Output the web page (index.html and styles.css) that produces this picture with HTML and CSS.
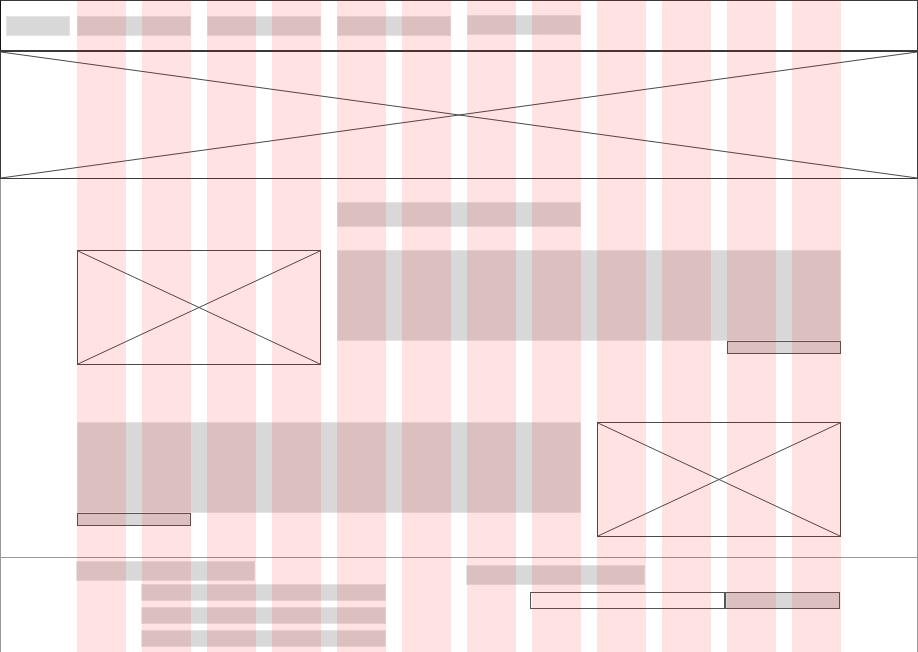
FILE: index.html
```html
<!DOCTYPE html>
<html lang="en">
<head>
    <meta charset="UTF-8">
    <meta name="viewport" content="width=device-width, initial-scale=1.0">
    <title>Wireframe</title>
    <link rel="stylesheet" href="styles.css">
</head>
<body>
    <header class="top">
        <div class="logo"></div>
        <nav class="nav">
            <div class="nav-item"></div>
            <div class="nav-item"></div>
            <div class="nav-item"></div>
            <div class="nav-item up"></div>
        </nav>
    </header>

    <div class="hero">
        <svg class="cross" viewBox="0 0 100 100" preserveAspectRatio="none">
            <line x1="0" y1="0" x2="100" y2="100" vector-effect="non-scaling-stroke"/>
            <line x1="100" y1="0" x2="0" y2="100" vector-effect="non-scaling-stroke"/>
        </svg>
    </div>

    <main class="content">
        <div class="grid">
            <div class="block title"></div>
        </div>

        <div class="grid row-one">
            <div class="pic pic-left">
                <svg class="cross" viewBox="0 0 100 100" preserveAspectRatio="none">
                    <line x1="0" y1="0" x2="100" y2="100" vector-effect="non-scaling-stroke"/>
                    <line x1="100" y1="0" x2="0" y2="100" vector-effect="non-scaling-stroke"/>
                </svg>
            </div>
            <div class="text-wrap wide-right">
                <div class="block text"></div>
                <div class="btn"></div>
            </div>
        </div>

        <div class="grid row-two">
            <div class="text-wrap wide-left">
                <div class="block text"></div>
                <div class="btn"></div>
            </div>
            <div class="pic pic-right">
                <svg class="cross" viewBox="0 0 100 100" preserveAspectRatio="none">
                    <line x1="0" y1="0" x2="100" y2="100" vector-effect="non-scaling-stroke"/>
                    <line x1="100" y1="0" x2="0" y2="100" vector-effect="non-scaling-stroke"/>
                </svg>
            </div>
        </div>
    </main>

    <footer class="foot">
        <div class="foot-inner">
            <div class="foot-col">
                <div class="block foot-title"></div>
                <ul class="links">
                    <li class="block"></li>
                    <li class="block"></li>
                    <li class="block"></li>
                </ul>
            </div>
            <div class="foot-col">
                <div class="block foot-title right"></div>
                <form class="signup">
                    <input type="text" class="field">
                    <button type="button" class="send"></button>
                </form>
            </div>
        </div>
    </footer>

    <!-- 12 column grid overlay -->
    <div class="overlay">
        <div class="overlay-grid">
            <span></span><span></span><span></span><span></span>
            <span></span><span></span><span></span><span></span>
            <span></span><span></span><span></span><span></span>
        </div>
    </div>
</body>
</html>
```

FILE: styles.css
```css
* {
    box-sizing: border-box;
}

body {
    margin: 0;
    padding: 0;
    width: 918px;
    height: 652px;
    overflow: hidden;
    background: #fff;
    font-family: "Liberation Sans", Arial, sans-serif;
}

.block {
    background-color: #d8d8d8;
    border: 1px solid #e4e4e4;
}

.cross {
    display: block;
    width: 100%;
    height: 100%;
}

.cross line {
    stroke: #4a4a4a;
    stroke-width: 1;
}

/* header */
.top {
    display: grid;
    grid-template-columns: 76px 764px 1fr;
    height: 50px;
    border-top: 1px solid #3a3a3a;
    border-left: 1px solid #111;
    border-right: 1px solid #3a3a3a;
}

.logo {
    margin: 15px 0 0 5px;
    width: 64px;
    height: 20px;
    background-color: #d8d8d8;
    border: 1px solid #e4e4e4;
}

.nav {
    display: grid;
    grid-template-columns: repeat(6, 114px);
    gap: 16px;
}

.nav-item {
    margin-top: 15px;
    height: 20px;
    background-color: #d8d8d8;
    border: 1px solid #e4e4e4;
}

.nav-item.up {
    margin-top: 14px;
}

.hero {
    height: 129px;
    border: 1px solid #3a3a3a;
    border-top-width: 2px;
}

/* main */
.content {
    height: 378px;
    border-left: 1px solid #999;
    border-right: 1px solid #999;
    padding-top: 23px;
}

.grid {
    display: grid;
    grid-template-columns: repeat(12, 49px);
    column-gap: 16px;
    width: 764px;
    margin: 0 auto;
}

.title {
    grid-column: 5 / 9;
    height: 25px;
}

.row-one {
    margin-top: 23px;
}

.row-two {
    margin-top: 57px;
}

.pic {
    border: 1px solid #4a4a4a;
    height: 115px;
}

.pic-left {
    grid-column: 1 / 5;
}

.pic-right {
    grid-column: 9 / 13;
}

.wide-right {
    grid-column: 5 / 13;
    display: flex;
    flex-direction: column;
    align-items: flex-end;
}

.wide-left {
    grid-column: 1 / 9;
    display: flex;
    flex-direction: column;
    align-items: flex-start;
}

.text {
    width: 100%;
    height: 91px;
}

.btn {
    width: 114px;
    height: 13px;
    background-color: #d8d8d8;
    border: 1px solid #555;
}

/* footer */
.foot {
    height: 95px;
    border-top: 1px solid #999;
    border-left: 1px solid #999;
    border-right: 1px solid #999;
}

.foot-inner {
    display: grid;
    grid-template-columns: repeat(2, 374px);
    column-gap: 16px;
    width: 764px;
    margin: 0 auto;
}

.foot-title {
    margin: 3px 0 0 -1px;
    width: 179px;
    height: 20px;
}

.foot-title.right {
    margin-top: 7px;
}

.links {
    list-style: none;
    margin: 3px 0 0 64px;
    padding: 0;
    display: flex;
    flex-direction: column;
    gap: 6px;
}

.links li {
    width: 245px;
    height: 17px;
}

.signup {
    display: flex;
    margin: 7px 0 0 63px;
}

.field {
    width: 195px;
    height: 17px;
    margin: 0;
    padding: 0;
    border: 1px solid #555;
    background: #fff;
}

.send {
    width: 115px;
    height: 17px;
    margin: 0;
    padding: 0;
    border: 1px solid #555;
    background-color: #d8d8d8;
}

/* grid overlay */
.overlay {
    position: fixed;
    top: 0;
    left: 0;
    width: 918px;
    height: 652px;
    pointer-events: none;
}

.overlay-grid {
    display: grid;
    grid-template-columns: repeat(12, 49px);
    column-gap: 16px;
    width: 764px;
    height: 100%;
    margin: 0 auto;
}

.overlay-grid span {
    background-color: rgba(255, 0, 0, 0.11);
}
```
